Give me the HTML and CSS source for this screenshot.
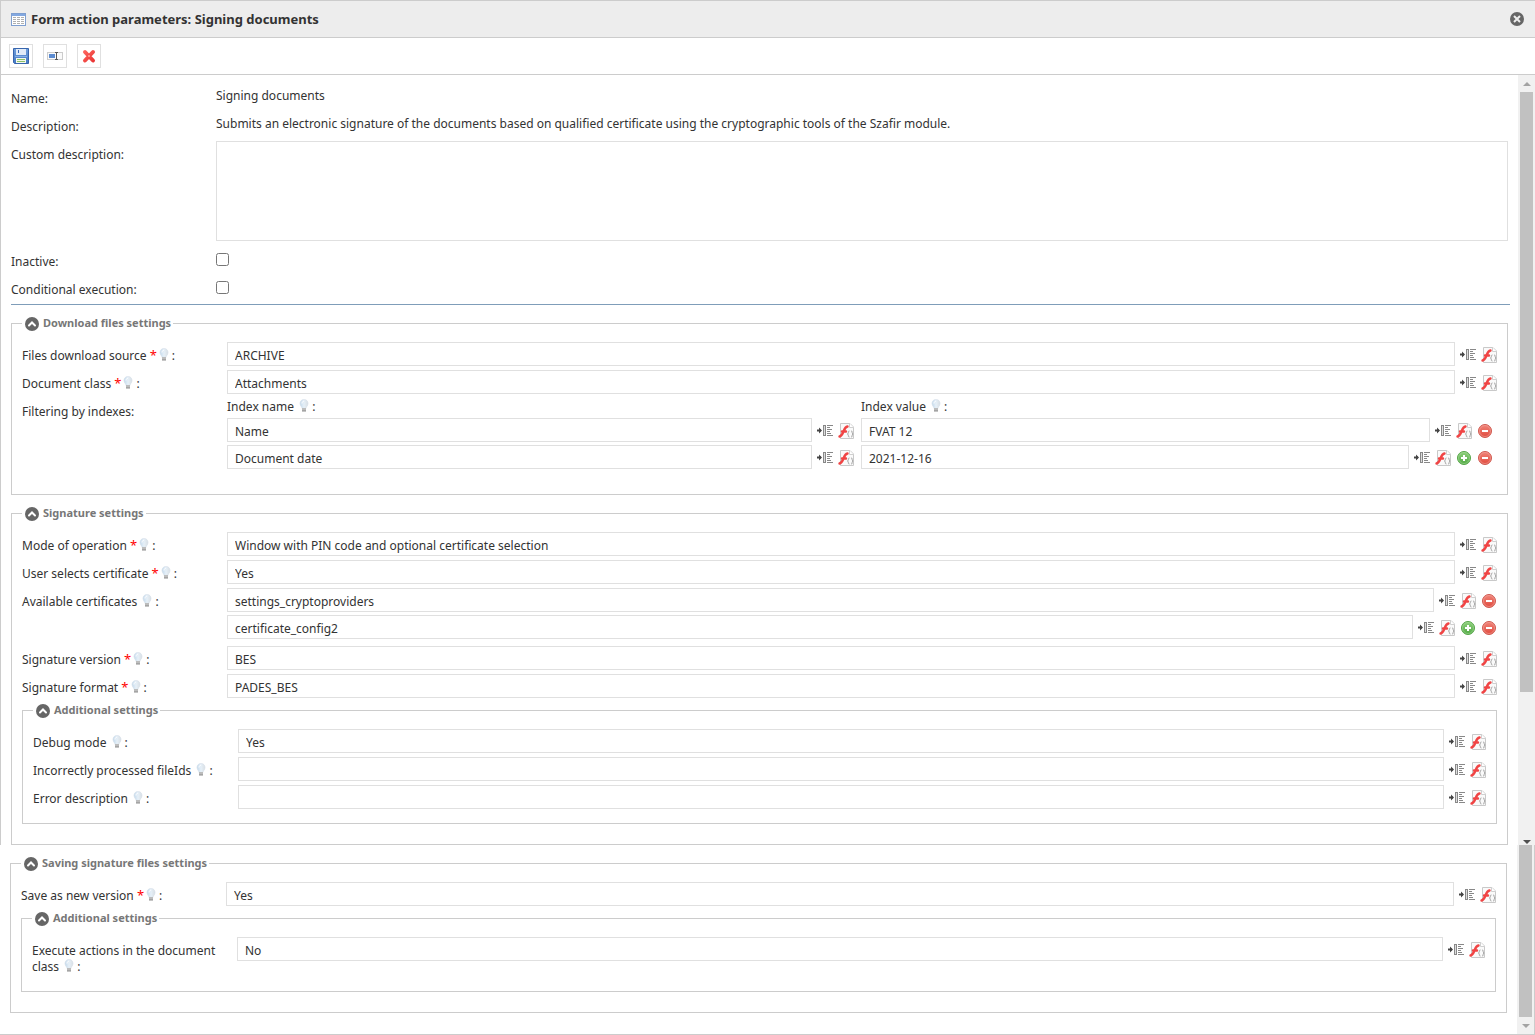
FILE: index.html
```html
<!DOCTYPE html>
<html lang="en">

<head>
    <meta charset="UTF-8">
    <meta name="viewport" content="width=device-width, initial-scale=1.0">
    <title>Form action parameters</title>
    <link rel="stylesheet" href="styles.css">
</head>

<body>
    <!-- icon set -->
    <svg class="sprite" aria-hidden="true">
        <defs>
            <linearGradient id="g-red" x1="0" y1="0" x2="0" y2="1">
                <stop offset="0" stop-color="#f0857a" />
                <stop offset="1" stop-color="#e0493c" />
            </linearGradient>
            <linearGradient id="g-green" x1="0" y1="0" x2="0" y2="1">
                <stop offset="0" stop-color="#8fd07c" />
                <stop offset="1" stop-color="#4fa843" />
            </linearGradient>
            <linearGradient id="g-bulb" x1="0" y1="0" x2="1" y2="0">
                <stop offset="0" stop-color="#c3d9ec" />
                <stop offset="0.5" stop-color="#e6f0f8" />
                <stop offset="1" stop-color="#d9dfe4" />
            </linearGradient>
            <linearGradient id="g-disk" x1="0" y1="0" x2="0" y2="1">
                <stop offset="0" stop-color="#6f9fdb" />
                <stop offset="1" stop-color="#4478c4" />
            </linearGradient>
            <linearGradient id="g-x" gradientUnits="userSpaceOnUse" x1="2" y1="2" x2="14" y2="14">
                <stop offset="0" stop-color="#ff6a62" />
                <stop offset="1" stop-color="#e83030" />
            </linearGradient>
        </defs>
        <symbol id="i-table" viewBox="0 0 16 14">
            <rect x="0.5" y="0.5" width="14" height="12" fill="#fff" stroke="#7f9fd0" />
            <path d="M1 2h13" stroke="#83a8e0" stroke-width="2" />
            <path d="M2 4.500h3M6 4.500h3M10 4.500h3M2 6.500h3M6 6.500h3M10 6.500h3M2 8.500h3M6 8.500h3M10 8.500h3M2 10.500h3M6 10.500h3M10 10.500h3" stroke="#b0b0b0" />
        </symbol>
        <symbol id="i-close" viewBox="0 0 14 14">
            <circle cx="7" cy="7" r="7" fill="#666" />
            <path d="M4 4l6 6M10 4l-6 6" stroke="#eee" stroke-width="2" />
        </symbol>
        <symbol id="i-save" viewBox="0 0 16 16">
            <path d="M0.500 0.500h15v15h-14l-1-1z" fill="url(#g-disk)" stroke="#3765ad" />
            <path d="M3 1h10v6H3z" fill="#e1ebf8" />
            <path d="M5 2h1v3H5z" fill="#3a6bb8" />
            <path d="M3 10h10v5H3z" fill="#f4f8ee" />
            <path d="M4 11.500h8M4 13.500h8" stroke="#8cc067" />
            <path d="M2 8.500h12" stroke="#86b0e8" />
        </symbol>
        <symbol id="i-rename" viewBox="0 0 16 16">
            <rect x="0.5" y="4.500" width="15" height="7" fill="#fafafa" stroke="#ccc" />
            <rect x="2" y="6" width="6" height="4" fill="#5b8bd0" />
            <path d="M9.500 4v8M8 4.500h3M8 11.500h3" fill="none" stroke="#555" />
        </symbol>
        <symbol id="i-delete" viewBox="0 0 16 16">
            <path d="M4 4l8 8.500M12 4l-8 8.500" stroke="url(#g-x)" stroke-width="4" stroke-linecap="round" />
            <path d="M7 7l2 2M9 7l-2 2" stroke="#ff8a84" stroke-width="1" />
        </symbol>
        <symbol id="i-up" viewBox="0 0 14 14">
            <circle cx="7" cy="7" r="7" fill="#666" />
            <path d="M4 8.500L7 5.500l3 3" fill="none" stroke="#fff" stroke-width="2" stroke-linecap="round" />
        </symbol>
        <symbol id="i-bulb" viewBox="0 0 14 14">
            <path d="M7 0.500C4.300 0.500 3 2.300 3 4.500C3 6.800 5 7.800 5 9.500h4C9 7.800 11 6.800 11 4.500C11 2.300 9.700 0.500 7 0.500z" fill="url(#g-bulb)" stroke="#d3dee8" stroke-width="0.600" />
            <path d="M5 4.500C5 3.200 5.700 2.200 7 2.200" fill="none" stroke="#fff" />
            <path d="M5 9h4v3H5z" fill="#bcbcbc" />
            <path d="M5 12h4" stroke="#8d8d8d" />
        </symbol>
        <symbol id="i-insert" viewBox="0 0 16 16">
            <path d="M0 7.500h4" stroke="#444" stroke-width="2" />
            <path d="M2 4.500L5 7.500L2 10.500z" fill="#444" />
            <rect x="6.500" y="2.500" width="2" height="10" fill="#ddd" stroke="#888" />
            <path d="M10 2.500h6M10 4.500h3M10 6.500h5M10 8.500h3M10 10.500h4M10 12.500h6" stroke="#888" />
        </symbol>
        <symbol id="i-func" viewBox="0 0 16 16">
            <path d="M2.500 0.500h9.500l3.500 3.500v11.500h-13z" fill="#fafafa" stroke="#c9c9c9" />
            <path d="M11.500 0.500v4h4" fill="#fff" stroke="#d0d0d0" />
            <path d="M1.500 13.500C4 13 4.500 10.500 5.500 8.500C6.500 6 7 4 9.500 3.500M4 8.500h4" fill="none" stroke="#f04444" stroke-width="2.400" stroke-linecap="round" />
            <path d="M11.500 8c-1.500 0-1 1-1.200 2L9.500 11l0.800 1c0.200 1-0.300 2 1.200 2M13 8c1.500 0 1 1 1.200 2l0.800 1l-0.800 1c-0.200 1 0.300 2-1.200 2" fill="none" stroke="#a3a3a3" />
        </symbol>
        <symbol id="i-add" viewBox="0 0 16 16">
            <circle cx="8" cy="8" r="6.500" fill="url(#g-green)" stroke="#55a548" />
            <circle cx="8" cy="8" r="5.500" fill="none" stroke="#a3d896" stroke-width="0.600" />
            <path d="M8 5v6M5 8h6" stroke="#fff" stroke-width="2" />
        </symbol>
        <symbol id="i-remove" viewBox="0 0 16 16">
            <circle cx="8" cy="8" r="6.500" fill="url(#g-red)" stroke="#cf5a50" />
            <circle cx="8" cy="8" r="5.500" fill="none" stroke="#f4a59d" stroke-width="0.600" />
            <path d="M5 8h6" stroke="#fff" stroke-width="2" />
        </symbol>
    </svg>

    <header class="title-bar">
        <svg class="title-icon"><use href="#i-table" /></svg>
        <h1>Form action parameters: Signing documents</h1>
        <button type="button" class="close" aria-label="Close"><svg><use href="#i-close" /></svg></button>
    </header>

    <div class="toolbar">
        <button type="button" aria-label="Save"><svg><use href="#i-save" /></svg></button>
        <button type="button" aria-label="Rename"><svg><use href="#i-rename" /></svg></button>
        <button type="button" aria-label="Delete"><svg><use href="#i-delete" /></svg></button>
    </div>

    <main>
        <div class="panel panel-main">
            <form class="form">
                <div class="row">
                    <span class="label">Name:</span>
                    <span class="value">Signing documents</span>
                </div>
                <div class="row">
                    <span class="label">Description:</span>
                    <span class="value">Submits an electronic signature of the documents based on qualified certificate using the cryptographic tools of the Szafir module.</span>
                </div>
                <div class="row row-area">
                    <label class="label" for="custom">Custom description:</label>
                    <textarea id="custom"></textarea>
                </div>
                <div class="row">
                    <label class="label" for="inactive">Inactive:</label>
                    <input type="checkbox" id="inactive">
                </div>
                <div class="row">
                    <label class="label" for="conditional">Conditional execution:</label>
                    <input type="checkbox" id="conditional">
                </div>
                <hr>

                <fieldset>
                    <legend><button type="button" aria-label="Collapse"><svg><use href="#i-up" /></svg></button><span>Download files settings</span></legend>
                    <div class="row">
                        <label class="label" for="source">Files download source <b>*</b><svg class="bulb"><use href="#i-bulb" /></svg>:</label>
                        <div class="field">
                            <input type="text" id="source" value="ARCHIVE">
                            <button type="button" aria-label="Insert variable"><svg><use href="#i-insert" /></svg></button>
                            <button type="button" aria-label="Function"><svg><use href="#i-func" /></svg></button>
                        </div>
                    </div>
                    <div class="row">
                        <label class="label" for="class">Document class <b>*</b><svg class="bulb"><use href="#i-bulb" /></svg>:</label>
                        <div class="field">
                            <input type="text" id="class" value="Attachments">
                            <button type="button" aria-label="Insert variable"><svg><use href="#i-insert" /></svg></button>
                            <button type="button" aria-label="Function"><svg><use href="#i-func" /></svg></button>
                        </div>
                    </div>
                    <div class="row row-filter">
                        <span class="label">Filtering by indexes:</span>
                        <div class="filter">
                            <span class="head" id="index-name">Index name <svg class="bulb"><use href="#i-bulb" /></svg>:</span>
                            <span class="head" id="index-value">Index value <svg class="bulb"><use href="#i-bulb" /></svg>:</span>
                            <div class="field">
                                <input type="text" aria-labelledby="index-name" value="Name">
                                <button type="button" aria-label="Insert variable"><svg><use href="#i-insert" /></svg></button>
                                <button type="button" aria-label="Function"><svg><use href="#i-func" /></svg></button>
                            </div>
                            <div class="field">
                                <input type="text" aria-labelledby="index-value" value="FVAT 12">
                                <button type="button" aria-label="Insert variable"><svg><use href="#i-insert" /></svg></button>
                                <button type="button" aria-label="Function"><svg><use href="#i-func" /></svg></button>
                                <button type="button" aria-label="Remove"><svg><use href="#i-remove" /></svg></button>
                            </div>
                            <div class="field">
                                <input type="text" aria-labelledby="index-name" value="Document date">
                                <button type="button" aria-label="Insert variable"><svg><use href="#i-insert" /></svg></button>
                                <button type="button" aria-label="Function"><svg><use href="#i-func" /></svg></button>
                            </div>
                            <div class="field">
                                <input type="text" aria-labelledby="index-value" value="2021-12-16">
                                <button type="button" aria-label="Insert variable"><svg><use href="#i-insert" /></svg></button>
                                <button type="button" aria-label="Function"><svg><use href="#i-func" /></svg></button>
                                <button type="button" aria-label="Add"><svg><use href="#i-add" /></svg></button>
                                <button type="button" aria-label="Remove"><svg><use href="#i-remove" /></svg></button>
                            </div>
                        </div>
                    </div>
                </fieldset>

                <fieldset>
                    <legend><button type="button" aria-label="Collapse"><svg><use href="#i-up" /></svg></button><span>Signature settings</span></legend>
                    <div class="row">
                        <label class="label" for="mode">Mode of operation <b>*</b><svg class="bulb"><use href="#i-bulb" /></svg>:</label>
                        <div class="field">
                            <input type="text" id="mode" value="Window with PIN code and optional certificate selection">
                            <button type="button" aria-label="Insert variable"><svg><use href="#i-insert" /></svg></button>
                            <button type="button" aria-label="Function"><svg><use href="#i-func" /></svg></button>
                        </div>
                    </div>
                    <div class="row">
                        <label class="label" for="selects">User selects certificate <b>*</b><svg class="bulb"><use href="#i-bulb" /></svg>:</label>
                        <div class="field">
                            <input type="text" id="selects" value="Yes">
                            <button type="button" aria-label="Insert variable"><svg><use href="#i-insert" /></svg></button>
                            <button type="button" aria-label="Function"><svg><use href="#i-func" /></svg></button>
                        </div>
                    </div>
                    <div class="row">
                        <label class="label" for="cert">Available certificates <svg class="bulb"><use href="#i-bulb" /></svg>:</label>
                        <div class="list">
                            <div class="field">
                                <input type="text" id="cert" value="settings_cryptoproviders">
                                <button type="button" aria-label="Insert variable"><svg><use href="#i-insert" /></svg></button>
                                <button type="button" aria-label="Function"><svg><use href="#i-func" /></svg></button>
                                <button type="button" aria-label="Remove"><svg><use href="#i-remove" /></svg></button>
                            </div>
                            <div class="field">
                                <input type="text" aria-label="Available certificates" value="certificate_config2">
                                <button type="button" aria-label="Insert variable"><svg><use href="#i-insert" /></svg></button>
                                <button type="button" aria-label="Function"><svg><use href="#i-func" /></svg></button>
                                <button type="button" aria-label="Add"><svg><use href="#i-add" /></svg></button>
                                <button type="button" aria-label="Remove"><svg><use href="#i-remove" /></svg></button>
                            </div>
                        </div>
                    </div>
                    <div class="row">
                        <label class="label" for="version">Signature version <b>*</b><svg class="bulb"><use href="#i-bulb" /></svg>:</label>
                        <div class="field">
                            <input type="text" id="version" value="BES">
                            <button type="button" aria-label="Insert variable"><svg><use href="#i-insert" /></svg></button>
                            <button type="button" aria-label="Function"><svg><use href="#i-func" /></svg></button>
                        </div>
                    </div>
                    <div class="row">
                        <label class="label" for="format">Signature format <b>*</b><svg class="bulb"><use href="#i-bulb" /></svg>:</label>
                        <div class="field">
                            <input type="text" id="format" value="PADES_BES">
                            <button type="button" aria-label="Insert variable"><svg><use href="#i-insert" /></svg></button>
                            <button type="button" aria-label="Function"><svg><use href="#i-func" /></svg></button>
                        </div>
                    </div>
                    <fieldset class="nested">
                        <legend><button type="button" aria-label="Collapse"><svg><use href="#i-up" /></svg></button><span>Additional settings</span></legend>
                        <div class="row">
                            <label class="label" for="debug">Debug mode <svg class="bulb"><use href="#i-bulb" /></svg>:</label>
                            <div class="field">
                                <input type="text" id="debug" value="Yes">
                                <button type="button" aria-label="Insert variable"><svg><use href="#i-insert" /></svg></button>
                                <button type="button" aria-label="Function"><svg><use href="#i-func" /></svg></button>
                            </div>
                        </div>
                        <div class="row">
                            <label class="label" for="file-ids">Incorrectly processed fileIds <svg class="bulb"><use href="#i-bulb" /></svg>:</label>
                            <div class="field">
                                <input type="text" id="file-ids">
                                <button type="button" aria-label="Insert variable"><svg><use href="#i-insert" /></svg></button>
                                <button type="button" aria-label="Function"><svg><use href="#i-func" /></svg></button>
                            </div>
                        </div>
                        <div class="row">
                            <label class="label" for="error">Error description <svg class="bulb"><use href="#i-bulb" /></svg>:</label>
                            <div class="field">
                                <input type="text" id="error">
                                <button type="button" aria-label="Insert variable"><svg><use href="#i-insert" /></svg></button>
                                <button type="button" aria-label="Function"><svg><use href="#i-func" /></svg></button>
                            </div>
                        </div>
                    </fieldset>
                </fieldset>
            </form>
            <div class="scrollbar">
                <span class="arrow-up"></span>
                <div class="track"><div class="thumb thumb-main"></div></div>
                <span class="arrow-down"></span>
            </div>
        </div>

        <div class="panel panel-saving">
            <form class="form">
                <fieldset>
                    <legend><button type="button" aria-label="Collapse"><svg><use href="#i-up" /></svg></button><span>Saving signature files settings</span></legend>
                    <div class="row">
                        <label class="label" for="save-new">Save as new version <b>*</b><svg class="bulb"><use href="#i-bulb" /></svg>:</label>
                        <div class="field">
                            <input type="text" id="save-new" value="Yes">
                            <button type="button" aria-label="Insert variable"><svg><use href="#i-insert" /></svg></button>
                            <button type="button" aria-label="Function"><svg><use href="#i-func" /></svg></button>
                        </div>
                    </div>
                    <fieldset class="nested">
                        <legend><button type="button" aria-label="Collapse"><svg><use href="#i-up" /></svg></button><span>Additional settings</span></legend>
                        <div class="row">
                            <label class="label" for="execute">Execute actions in the document class <svg class="bulb"><use href="#i-bulb" /></svg>:</label>
                            <div class="field">
                                <input type="text" id="execute" value="No">
                                <button type="button" aria-label="Insert variable"><svg><use href="#i-insert" /></svg></button>
                                <button type="button" aria-label="Function"><svg><use href="#i-func" /></svg></button>
                            </div>
                        </div>
                    </fieldset>
                </fieldset>
            </form>
            <div class="scrollbar">
                <div class="track"><div class="thumb"></div></div>
                <span class="arrow-down off"></span>
            </div>
        </div>
    </main>
</body>

</html>
```
FILE: styles.css
```css
* {
    box-sizing: border-box;
}

body {
    margin: 0;
    background: #fff;
    color: #333;
    font: 12px/16px Tahoma, "Noto Sans", sans-serif;
}

button {
    display: block;
    flex: none;
    padding: 0;
    border: none;
    background: none;
    cursor: pointer;
}

svg {
    display: block;
    width: 16px;
    height: 16px;
}

.sprite {
    position: absolute;
    width: 0;
    height: 0;
}

.title-bar {
    display: flex;
    align-items: center;
    height: 38px;
    padding: 0 11px 0 10px;
    background: #ededed;
    border: 1px solid #ccc;
    border-right: none;
}

.title-icon {
    height: 14px;
    margin-top: 2px;
}

.title-bar h1 {
    flex: 1;
    margin: 0 0 0 4px;
    font-size: 13px;
}

.close svg,
legend svg {
    width: 14px;
    height: 14px;
}

.toolbar {
    display: flex;
    gap: 10px;
    padding: 6px 8px;
    border-left: 1px solid #ccc;
    border-bottom: 1px solid #ccc;
}

.toolbar button {
    padding: 3px;
    border: 1px solid #e0e0e0;
}

.panel {
    display: flex;
}

.panel-main {
    border-left: 1px solid #ccc;
}

.panel-saving {
    border-right: 1px solid #ccc;
    border-bottom: 1px solid #ccc;
}

.form {
    flex: 1;
    min-width: 0;
    padding: 0 10px;
}

.panel-main .form {
    padding-top: 10px;
}

.panel-saving .form {
    padding-bottom: 21px;
}

.row {
    display: flex;
    align-items: flex-start;
    margin-bottom: 4px;
    min-height: 24px;
}

.label {
    flex: none;
    width: 205px;
    padding: 6px 10px 2px 0;
}

.label b {
    color: #f00;
    font-size: 13px;
    font-weight: normal;
    line-height: 1;
}

.value {
    padding-top: 3px;
}

.bulb {
    display: inline-block;
    width: 14px;
    height: 14px;
    margin-right: 1px;
    vertical-align: -2px;
}

textarea {
    flex: 1;
    height: 100px;
    border: 1px solid #e0e0e0;
    resize: none;
}

.row-area {
    min-height: 103px;
}

input[type="checkbox"] {
    margin: 5px 0;
}

hr {
    height: 1px;
    margin: 0 -2px 10px 0;
    border: none;
    background: #7f9db9;
}

fieldset {
    min-width: 0;
    margin: 0 0 10px;
    padding: 10px;
    border: 1px solid #ccc;
}

.panel-main fieldset:last-child {
    margin-bottom: 0;
}

.panel-main fieldset.nested {
    margin-bottom: 10px;
}

.panel-saving .form > fieldset {
    margin: 10px 0 0;
}

legend {
    display: flex;
    align-items: center;
    gap: 4px;
    height: 17px;
    padding: 0 2px 0 3px;
    color: #777;
    font-size: 11px;
    font-weight: bold;
}

legend span {
    padding-bottom: 2px;
}

.field {
    display: flex;
    flex: 1;
    align-items: center;
    gap: 5px;
    min-width: 0;
}

.field input {
    flex: 1;
    min-width: 0;
    height: 24px;
    padding: 2px 7px 0;
    border: 1px solid #e0e0e0;
    color: inherit;
    font: inherit;
}

.field button {
    padding-top: 2px;
}

.list {
    display: flex;
    flex: 1;
    flex-direction: column;
    gap: 3px;
    padding-bottom: 3px;
}

.filter {
    display: grid;
    flex: 1;
    grid-template-columns: calc(50% - 6px) 1fr;
    gap: 3px 7px;
    padding-right: 4px;
}

.head {
    height: 17px;
    padding-top: 1px;
}

.row-filter {
    margin-bottom: 15px;
}

.scrollbar {
    display: flex;
    flex: none;
    flex-direction: column;
    align-items: center;
    width: 17px;
    background: #f1f1f1;
}

.track {
    flex: 1;
    width: 13px;
}

.thumb {
    height: 100%;
    background: #c1c1c1;
}

.thumb-main {
    height: 81%;
}

.arrow-up {
    margin: 7px 0 6px;
    border: 4px solid transparent;
    border-top: none;
    border-bottom-color: #a3a3a3;
}

.arrow-down {
    margin: 7px 0 1px;
    border: 4px solid transparent;
    border-top-color: #505050;
    border-bottom: none;
}

.arrow-down.off {
    margin-bottom: 6px;
    border-top-color: #a3a3a3;
}
```
